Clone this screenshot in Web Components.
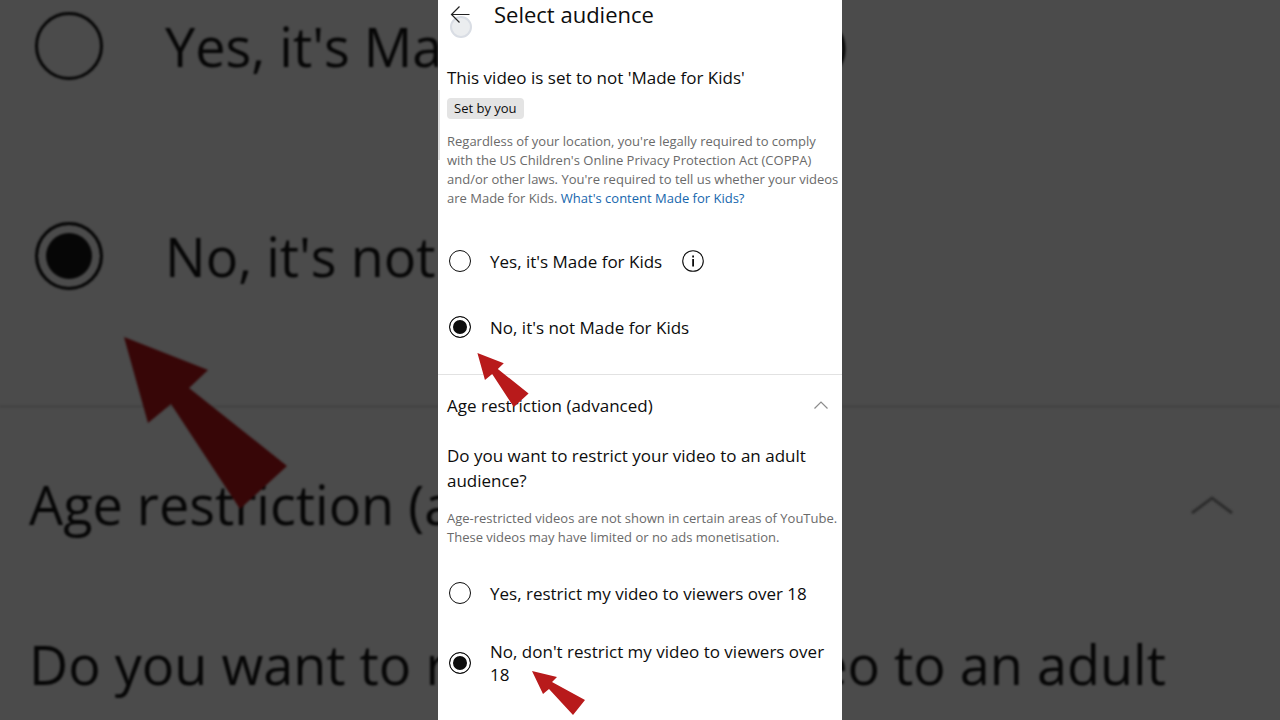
<!DOCTYPE html>
<html lang="en">
<head>
<meta charset="utf-8">
<title>Select audience</title>
<style>
  body { margin: 0; font-family: "Open Sans", "Noto Sans", sans-serif; color: #0d0d0d; background: #4b4b4b; }
</style>
</head>
<body>
<audience-stage></audience-stage>

<template id="t-stage">
  <style>
    :host { display: grid; grid-template-columns: minmax(0, 1fr) clamp(360px, 31.5625%, 560px) minmax(0, 1fr); min-height: 100vh; overflow: hidden; }
  </style>
  <backdrop-start aria-hidden="true" inert></backdrop-start>
  <audience-screen></audience-screen>
  <backdrop-end aria-hidden="true" inert></backdrop-end>
</template>

<template id="t-screen">
  <style>
    :host { display: block; position: relative; box-sizing: border-box; background: #fff; padding-bottom: 24px; }
    header { display: flex; align-items: center; height: 30px; padding-left: 12px; gap: 23px; }
    .back { display: flex; position: relative; padding: 0; border: 0; background: none; width: 21px; height: 22px; }
    .back svg { position: relative; }
    .touch { position: absolute; left: 0; top: 12px; width: 18px; height: 18px; border: 2px solid #d9dde4; border-radius: 50%; background: #ebedef; }
    h1 { align-self: start; margin: 0; font-size: 22px; line-height: 28px; font-weight: 400; }
    h2 { margin: 0; font-size: 17px; line-height: 25px; font-weight: 400; }
    section { padding: 0 3px 0 9px; }
    .video { padding-top: 35px; padding-bottom: 30px; border-bottom: 1px solid #e2e2e2; }
    .scroll { position: absolute; left: 0; top: 90px; width: 2px; height: 70px; background: #dedede; }
    status-chip { margin-top: 8px; }
    p { margin: 13px 0 0; font-size: 13px; line-height: 19px; color: #6a6a6a; }
    a { color: #1566ad; text-decoration: none; }
    choice-group { margin-top: 36px; --space: 32px; }
    .age h2 + p { margin-top: 16px; }
    .age choice-group { margin-top: 29px; --space: 30px; }
    .toggle { display: flex; align-items: center; justify-content: space-between; width: 100%; height: 60px; margin-bottom: 8px; padding: 0 10px 0 0; border: 0; background: none; font: inherit; font-size: 17px; line-height: 25px; color: inherit; text-align: left; }
    pointer-arrow { position: absolute; }
    .first { left: 39px; top: 353px; width: 52px; height: 54px; }
    .second { left: 94px; top: 671px; width: 53px; height: 44px; }
  </style>
  <header>
    <button class="back" aria-label="Back">
      <span class="touch"></span>
      <svg width="21" height="22" viewBox="0 0 21 22" fill="none" stroke="#222" stroke-width="1.2"><path d="M19.500 10.500H2M9.500 2.500 1.500 10.500l8 8"/></svg>
    </button>
    <h1>Select audience</h1>
  </header>
  <div class="scroll"></div>
  <section class="video">
    <h2>This video is set to not 'Made for Kids'</h2>
    <status-chip>Set by you</status-chip>
    <p>Regardless of your location, you're legally required to comply with the US Children's Online Privacy Protection Act (COPPA) and/or other laws. You're required to tell us whether your videos are Made for Kids. <a href="#kids">What's content Made for Kids?</a></p>
    <choice-group label="Made for Kids">
      <choice-row>Yes, it's Made for Kids<info-icon slot="extra"></info-icon></choice-row>
      <choice-row checked>No, it's not Made for Kids</choice-row>
    </choice-group>
  </section>
  <section class="age">
    <button class="toggle" aria-expanded="true">Age restriction (advanced)
      <svg width="16" height="10" viewBox="0 0 16 10" fill="none" stroke="#8c8c8c" stroke-width="1.2"><path d="M1.500 8.500 8 2l6.500 6.500"/></svg>
    </button>
    <h2>Do you want to restrict your video to an adult audience?</h2>
    <p>Age-restricted videos are not shown in certain areas of YouTube. These videos may have limited or no ads monetisation.</p>
    <choice-group label="Age restriction">
      <choice-row>Yes, restrict my video to viewers over 18</choice-row>
      <choice-row checked>No, don't restrict my video to viewers over 18</choice-row>
    </choice-group>
  </section>
  <pointer-arrow class="first"></pointer-arrow>
  <pointer-arrow class="second" flat></pointer-arrow>
</template>

<template id="t-start">
  <style>
    :host { display: block; position: relative; overflow: hidden; white-space: nowrap; background: #4b4b4b; color: #060606;
      --row: 92px; --inset: 7px; --dot: 68px; --ring: 3px; --gap: 62px; --size: 54px; --line: 80px; --space: 118px; --hole: 8px; --face: #4b4b4b; }
    .soft { filter: blur(1px); }
    .video { padding: 0 0 103px 28px; border-bottom: 3px solid #444; }
    .age { padding-left: 29px; font-size: 54px; line-height: 80px; }
    .head { display: flex; align-items: center; height: 192px; margin-bottom: 24px; }
    pointer-arrow { position: absolute; left: 124px; top: 337px; width: 163px; height: 172px; --arrow: #370607; }
  </style>
  <div class="soft">
    <div class="video">
      <choice-group label="Made for Kids">
        <choice-row>Yes, it's Ma</choice-row>
        <choice-row checked>No, it's not</choice-row>
      </choice-group>
    </div>
    <div class="age">
      <div class="head">Age restriction (a</div>
      <div>Do you want to r</div>
    </div>
    <pointer-arrow></pointer-arrow>
  </div>
</template>

<template id="t-end">
  <style>
    :host { display: block; overflow: hidden; white-space: nowrap; background: #4b4b4b; color: #060606; --info: 70px; }
    .soft { filter: blur(1px); }
    .video { display: flex; box-sizing: border-box; height: 408px; padding-top: 14px; border-bottom: 3px solid #444; }
    info-icon { margin-left: -66px; }
    .head { display: flex; align-items: center; justify-content: flex-end; height: 196px; margin-bottom: 20px; padding-right: 46px; }
    .text { display: flex; justify-content: flex-end; padding-right: 114px; font-size: 54px; line-height: 80px; }
  </style>
  <div class="soft">
    <div class="video"><info-icon></info-icon></div>
    <div class="head">
      <svg width="44" height="28" viewBox="0 0 44 28" fill="none" stroke="#2c2c2c" stroke-width="3"><path d="M2 21 22 6l20 15"/></svg>
    </div>
    <div class="text">eo to an adult</div>
  </div>
</template>

<template id="t-chip">
  <style>
    :host { display: block; width: fit-content; box-sizing: border-box; height: 21px; padding: 0 7px; border-radius: 4px; background: #e4e4e4; font-size: 13px; line-height: 21px; }
  </style>
  <slot></slot>
</template>

<template id="t-group">
  <style>:host { display: grid; row-gap: var(--space, 31px); }</style>
  <slot></slot>
</template>

<template id="t-row">
  <style>
    :host { display: flex; align-items: center; min-height: var(--row, 34px); gap: 20px; }
    label { display: flex; align-items: center; gap: var(--gap, 19px); padding-left: var(--inset, 2px); font-size: var(--size, 17px); line-height: var(--line, 23px); }
    input { appearance: none; flex: none; box-sizing: border-box; margin: 0; width: var(--dot, 22px); height: var(--dot, 22px); border: var(--ring, 1px) solid currentColor; border-radius: 50%; color: inherit; }
    input:checked { background: currentColor; box-shadow: inset 0 0 0 var(--hole, 3px) var(--face, #fff); }
  </style>
  <label><input type="radio"><span><slot></slot></span></label>
  <slot name="extra"></slot>
</template>

<template id="t-info">
  <style>
    :host { display: block; flex: none; width: var(--info, 22px); height: var(--info, 22px); }
    svg { display: block; width: 100%; height: 100%; }
  </style>
  <svg viewBox="0 0 22 22"><circle cx="11" cy="11" r="10.300" fill="none" stroke="currentColor" stroke-width="1.100"/><path d="M10.200 5.500h1.800v2h-1.800zM10.200 9h1.800v7.500h-1.800z" fill="currentColor"/></svg>
</template>

<template id="t-arrow">
  <style>
    :host { display: block; }
    svg { display: block; width: 100%; height: 100%; fill: var(--arrow, #b81a1b); }
    .low, :host([flat]) .steep { display: none; }
    :host([flat]) .low { display: block; }
  </style>
  <svg class="steep" viewBox="0 0 163 172"><path d="M0 0 84 33 65 51 163 129 116 172 47 67 24 86z"/></svg>
  <svg class="low" viewBox="0 0 53 44"><path d="M0 0 25 6 20 11 53 29 41 44 17 18 11 23z"/></svg>
</template>

<script>
  const fromTemplate = id => class extends HTMLElement {
    constructor() {
      super();
      this.attachShadow({ mode: "open" }).append(document.getElementById(id).content.cloneNode(true));
    }
  };

  class ChoiceRow extends fromTemplate("t-row") {
    get input() { return this.shadowRoot.querySelector("input"); }
    connectedCallback() {
      this.input.checked = this.hasAttribute("checked");
      this.input.addEventListener("change", () => this.dispatchEvent(new CustomEvent("choose", { bubbles: true })));
    }
  }

  class ChoiceGroup extends fromTemplate("t-group") {
    connectedCallback() {
      this.setAttribute("role", "radiogroup");
      this.setAttribute("aria-label", this.getAttribute("label"));
      this.addEventListener("choose", e => {
        for (const row of this.querySelectorAll("choice-row")) row.input.checked = row === e.target;
      });
    }
  }

  customElements.define("info-icon", class extends fromTemplate("t-info") {});
  customElements.define("pointer-arrow", class extends fromTemplate("t-arrow") {});
  customElements.define("status-chip", class extends fromTemplate("t-chip") {});
  customElements.define("choice-row", ChoiceRow);
  customElements.define("choice-group", ChoiceGroup);
  customElements.define("audience-screen", class extends fromTemplate("t-screen") {});
  customElements.define("backdrop-start", class extends fromTemplate("t-start") {});
  customElements.define("backdrop-end", class extends fromTemplate("t-end") {});
  customElements.define("audience-stage", class extends fromTemplate("t-stage") {});
</script>
</body>
</html>
